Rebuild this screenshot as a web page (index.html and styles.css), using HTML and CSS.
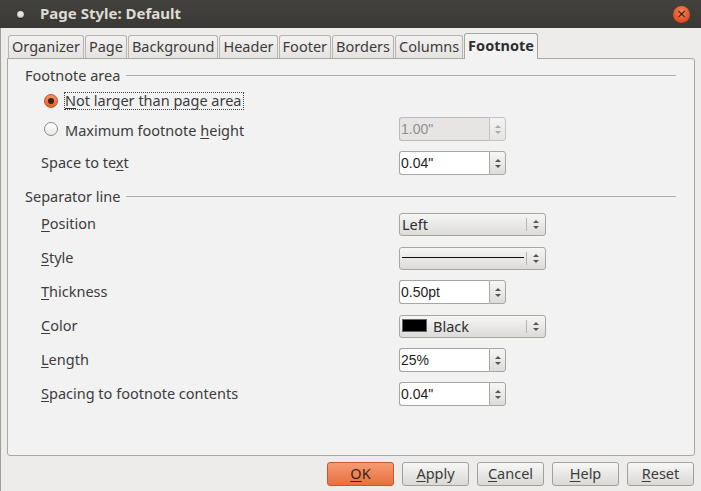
FILE: index.html
```html
<!DOCTYPE html>
<html>
<head>
<meta charset="utf-8">
<link rel="stylesheet" href="styles.css">
</head>
<body>
<div class="window">
  <div class="titlebar">
    <span class="win-menu"></span>
    <span class="title">Page Style: Default</span>
    <span class="close">×</span>
  </div>
  <div class="tabs">
    <div class="tab">Organizer</div>
    <div class="tab">Page</div>
    <div class="tab">Background</div>
    <div class="tab">Header</div>
    <div class="tab">Footer</div>
    <div class="tab">Borders</div>
    <div class="tab">Columns</div>
    <div class="tab active">Footnote</div>
  </div>
  <div class="panel">
    <div class="section-head"><span>Footnote area</span><span class="rule"></span></div>
    <div class="row r1">
      <div class="label radio-label"><span class="radio checked"></span><span class="focus"><u>N</u>ot larger than page area</span></div>
    </div>
    <div class="row r2">
      <div class="label radio-label"><span class="radio"></span><span class="plain">Maximum footnote <u>h</u>eight</span></div>
      <div class="spin disabled"><span class="field">1.00"</span><span class="spin-btn"><i class="up"></i><i class="down"></i></span></div>
    </div>
    <div class="row r3">
      <div class="label">Space to te<u>x</u>t</div>
      <div class="spin"><span class="field">0.04"</span><span class="spin-btn"><i class="up"></i><i class="down"></i></span></div>
    </div>
    <div class="section-head head2"><span>Separator line</span><span class="rule"></span></div>
    <div class="row sep first">
      <div class="label"><u>P</u>osition</div>
      <div class="combo"><span class="combo-text">Left</span><span class="combo-sep"></span><span class="combo-arrows"><i class="up"></i><i class="down"></i></span></div>
    </div>
    <div class="row sep">
      <div class="label"><u>S</u>tyle</div>
      <div class="combo"><span class="combo-text"><span class="line-sample"></span></span><span class="combo-sep"></span><span class="combo-arrows"><i class="up"></i><i class="down"></i></span></div>
    </div>
    <div class="row sep">
      <div class="label"><u>T</u>hickness</div>
      <div class="spin"><span class="field">0.50pt</span><span class="spin-btn"><i class="up"></i><i class="down"></i></span></div>
    </div>
    <div class="row sep">
      <div class="label"><u>C</u>olor</div>
      <div class="combo"><span class="combo-text"><span class="swatch"></span>Black</span><span class="combo-sep"></span><span class="combo-arrows"><i class="up"></i><i class="down"></i></span></div>
    </div>
    <div class="row sep">
      <div class="label"><u>L</u>ength</div>
      <div class="spin"><span class="field">25%</span><span class="spin-btn"><i class="up"></i><i class="down"></i></span></div>
    </div>
    <div class="row sep">
      <div class="label"><u>S</u>pacing to footnote contents</div>
      <div class="spin"><span class="field">0.04"</span><span class="spin-btn"><i class="up"></i><i class="down"></i></span></div>
    </div>
  </div>
  <div class="buttons">
    <button class="btn ok"><u>O</u>K</button>
    <button class="btn"><u>A</u>pply</button>
    <button class="btn"><u>C</u>ancel</button>
    <button class="btn"><u>H</u>elp</button>
    <button class="btn"><u>R</u>eset</button>
  </div>
</div>
</body>
</html>
```

FILE: styles.css
```css
* { box-sizing: border-box; }
html, body { margin: 0; padding: 0; }
body {
  width: 701px;
  height: 491px;
  overflow: hidden;
  background: #edeceb;
  font-family: "Noto Sans", "DejaVu Sans", sans-serif;
  font-size: 14.5px;
  color: #3c3c3c;
}
u { text-decoration: underline; text-underline-offset: 2px; }

.window {
  width: 701px;
  height: 491px;
  display: flex;
  flex-direction: column;
  border-left: 1px solid #a09e99;
}

.titlebar {
  height: 28px;
  flex: none;
  display: flex;
  align-items: center;
  background: linear-gradient(#42413d, #3a3935);
  margin-left: -1px;
  padding-left: 16px;
  padding-right: 10px;
}
.win-menu {
  width: 7px;
  height: 7px;
  border-radius: 50%;
  background: radial-gradient(circle at 50% 40%, #e6e4df 0 45%, #9d9b96 75%);
  box-shadow: 0 1px 0 #24231f;
  margin-left: 1px;
}
.title {
  margin-left: 16px;
  color: #dfdbd2;
  font-weight: bold;
  font-size: 15px;
  flex: 1;
  padding-bottom: 2px;
}
.close {
  width: 17px;
  height: 17px;
  border-radius: 50%;
  background: radial-gradient(circle at 50% 35%, #f58a5f, #df4b1f 70%, #c23c14);
  color: #3a1a0c;
  font-size: 13px;
  line-height: 16px;
  text-align: center;
  font-family: "DejaVu Sans", sans-serif;
  margin-right: 1px;
}

.tabs {
  flex: none;
  display: flex;
  align-items: flex-end;
  height: 30px;
  padding-left: 7px;
  position: relative;
  z-index: 1;
}
.tab {
  height: 23px;
  padding: 0 3px;
  margin-right: 1px;
  border: 1px solid #b7b5b0;
  border-bottom: none;
  border-radius: 3px 3px 0 0;
  background: linear-gradient(#f3f2f1, #e4e3e1);
  line-height: 21px;
  white-space: nowrap;
}
.tab.active {
  height: 26px;
  font-weight: bold;
  background: #f2f2f2;
  border-color: #a9a7a2;
  margin-bottom: -1px;
  line-height: 23px;
  color: #2e2e2e;
}

.panel {
  flex: none;
  height: 398px;
  margin-left: 6px;
  width: 688px;
  background: #f2f2f2;
  border: 1px solid #a9a7a2;
  border-radius: 0 3px 3px 3px;
  padding: 7px 18px 0 17px;
}

.section-head {
  display: flex;
  align-items: center;
  height: 20px;
  padding-bottom: 2px;
}
.section-head .rule {
  flex: 1;
  height: 1px;
  background: #b0aeaa;
  margin-left: 6px;
}
.head2 { margin-top: 12px; }

.row {
  display: flex;
  align-items: center;
  height: 24px;
  padding-left: 16px;
}
.r1 { margin-top: 3px; }
.r2 { margin-top: 4px; }
.r3 { margin-top: 10px; }
.sep { margin-top: 10px; }
.sep.first { margin-top: 5px; }

.label {
  width: 358px;
  flex: none;
  white-space: nowrap;
  padding-bottom: 2px;
}
.radio-label {
  display: flex;
  align-items: center;
  padding-left: 3px;
  padding-bottom: 0;
}
.radio {
  width: 14px;
  height: 14px;
  border-radius: 50%;
  border: 1px solid #8d8b86;
  background: linear-gradient(#ffffff, #e9e8e6);
  margin-right: 7px;
  flex: none;
  display: flex;
  align-items: center;
  justify-content: center;
}
.radio.checked {
  border-color: #c4501f;
  background: linear-gradient(#f6936a, #e4612f);
}
.radio.checked::after {
  content: "";
  width: 6px;
  height: 6px;
  border-radius: 50%;
  background: #3a2418;
}
.focus {
  border: 1px dotted #444;
  padding: 0 1px 1px 0;
  margin-left: -1px;
  line-height: 15px;
}
.r2 .plain { padding-top: 1px; }

.spin {
  width: 107px;
  height: 24px;
  display: flex;
  flex: none;
}
.field {
  flex: 1;
  background: #ffffff;
  border: 1px solid #a8a6a1;
  border-right: none;
  border-radius: 3px 0 0 3px;
  font-family: "Liberation Sans", Arial, sans-serif;
  font-size: 14px;
  color: #1e1e1e;
  line-height: 22px;
  padding-left: 1px;
}
.spin-btn {
  width: 17px;
  flex: none;
  border: 1px solid #a8a6a1;
  border-radius: 0 3px 3px 0;
  background: linear-gradient(#f6f6f5, #dddcda);
  display: flex;
  flex-direction: column;
  align-items: center;
  justify-content: center;
  gap: 3px;
}
i.up, i.down {
  display: block;
  width: 0;
  height: 0;
  border-left: 3px solid transparent;
  border-right: 3px solid transparent;
}
i.up { border-bottom: 3px solid #555; }
i.down { border-top: 3px solid #555; }

.spin.disabled .field {
  background: #e6e5e3;
  color: #8f8e8b;
  border-color: #bdbbb7;
}
.spin.disabled .spin-btn {
  border-color: #c4c2be;
  background: linear-gradient(#f3f3f2, #e6e5e3);
}
.spin.disabled i.up { border-bottom-color: #aaa9a6; }
.spin.disabled i.down { border-top-color: #aaa9a6; }

.combo {
  width: 147px;
  height: 23px;
  flex: none;
  display: flex;
  align-items: center;
  border: 1px solid #a8a6a1;
  border-radius: 3px;
  background: linear-gradient(#f6f6f5, #dcdbd8);
}
.combo-text {
  flex: 1;
  display: flex;
  align-items: center;
  padding-left: 2px;
  padding-bottom: 1px;
  color: #2e2e2e;
  white-space: nowrap;
}
.combo-sep {
  width: 1px;
  height: 13px;
  background: #b6b4af;
  flex: none;
}
.combo-arrows {
  width: 18px;
  flex: none;
  display: flex;
  flex-direction: column;
  align-items: center;
  gap: 3px;
}
.line-sample {
  display: block;
  width: 122px;
  height: 1px;
  background: #111;
}
.swatch {
  width: 25px;
  height: 13px;
  background: #000;
  border: 1px solid #666;
  margin-right: 6px;
  flex: none;
}

.buttons {
  flex: 1;
  display: flex;
  justify-content: flex-end;
  align-items: flex-start;
  gap: 8px;
  padding-top: 6px;
  padding-right: 7px;
}
.btn {
  width: 67px;
  height: 24px;
  border: 1px solid #a3a19c;
  border-radius: 3px;
  background: linear-gradient(#f7f7f6, #dad9d6);
  font-family: inherit;
  font-size: 14.5px;
  color: #3c3c3c;
  padding: 0 0 2px;
  line-height: 20px;
}
.btn.ok {
  border-color: #c5582f;
  background: linear-gradient(#f59a72, #e8703f);
  color: #3a2418;
}
```
